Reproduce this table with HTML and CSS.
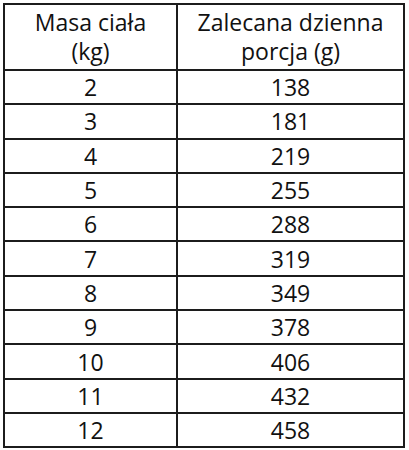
FILE: index.html
```html
<!DOCTYPE html>
<html lang="pl">
<head>
<meta charset="utf-8">
<link rel="stylesheet" href="styles.css">
</head>
<body>
<table class="portions">
  <thead>
    <tr class="head-row">
      <th class="col-mass">Masa ciała<br>(kg)</th>
      <th class="col-portion">Zalecana dzienna<br>porcja (g)</th>
    </tr>
  </thead>
  <tbody>
    <tr><td>2</td><td>138</td></tr>
    <tr><td>3</td><td>181</td></tr>
    <tr><td>4</td><td>219</td></tr>
    <tr><td>5</td><td>255</td></tr>
    <tr><td>6</td><td>288</td></tr>
    <tr><td>7</td><td>319</td></tr>
    <tr><td>8</td><td>349</td></tr>
    <tr><td>9</td><td>378</td></tr>
    <tr><td>10</td><td>406</td></tr>
    <tr><td>11</td><td>432</td></tr>
    <tr><td>12</td><td>458</td></tr>
  </tbody>
</table>
</body>
</html>
```
FILE: styles.css
```css
html, body {
  margin: 0;
  padding: 0;
  background: #ffffff;
}
body {
  padding: 3px 0 0 3px;
}
.portions {
  border-collapse: collapse;
  width: 402px;
  font-family: "Open Sans", "Liberation Sans", sans-serif;
  font-size: 23px;
  color: #111111;
  table-layout: fixed;
}
.portions th,
.portions td {
  border: 2px solid #1c1c1c;
  text-align: center;
  vertical-align: middle;
  padding: 0;
  font-weight: normal;
}
.col-mass {
  width: 171px;
}
.head-row th {
  height: 64px;
  line-height: 29px;
}
.portions td {
  height: 32.3px;
  line-height: 28px;
}
```
